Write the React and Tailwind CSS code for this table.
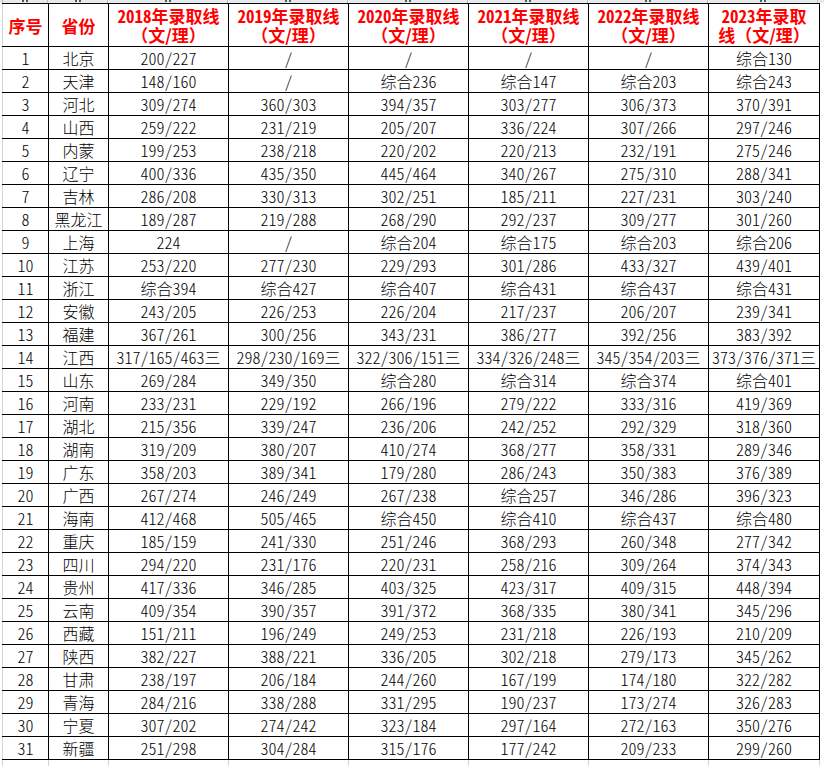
import React from "react";

const years = [
  ["2018年录取线", "（文/理）"],
  ["2019年录取线", "（文/理）"],
  ["2020年录取线", "（文/理）"],
  ["2021年录取线", "（文/理）"],
  ["2022年录取线", "（文/理）"],
  ["2023年录取", "线（文/理）"],
];

const rows = [
  ["北京", "200/227", "/", "/", "/", "/", "综合130"],
  ["天津", "148/160", "/", "综合236", "综合147", "综合203", "综合243"],
  ["河北", "309/274", "360/303", "394/357", "303/277", "306/373", "370/391"],
  ["山西", "259/222", "231/219", "205/207", "336/224", "307/266", "297/246"],
  ["内蒙", "199/253", "238/218", "220/202", "220/213", "232/191", "275/246"],
  ["辽宁", "400/336", "435/350", "445/464", "340/267", "275/310", "288/341"],
  ["吉林", "286/208", "330/313", "302/251", "185/211", "227/231", "303/240"],
  ["黑龙江", "189/287", "219/288", "268/290", "292/237", "309/277", "301/260"],
  ["上海", "224", "/", "综合204", "综合175", "综合203", "综合206"],
  ["江苏", "253/220", "277/230", "229/293", "301/286", "433/327", "439/401"],
  ["浙江", "综合394", "综合427", "综合407", "综合431", "综合437", "综合431"],
  ["安徽", "243/205", "226/253", "226/204", "217/237", "206/207", "239/341"],
  ["福建", "367/261", "300/256", "343/231", "386/277", "392/256", "383/392"],
  ["江西", "317/165/463三", "298/230/169三", "322/306/151三", "334/326/248三", "345/354/203三", "373/376/371三"],
  ["山东", "269/284", "349/350", "综合280", "综合314", "综合374", "综合401"],
  ["河南", "233/231", "229/192", "266/196", "279/222", "333/316", "419/369"],
  ["湖北", "215/356", "339/247", "236/206", "242/252", "292/329", "318/360"],
  ["湖南", "319/209", "380/207", "410/274", "368/277", "358/331", "289/346"],
  ["广东", "358/203", "389/341", "179/280", "286/243", "350/383", "376/389"],
  ["广西", "267/274", "246/249", "267/238", "综合257", "346/286", "396/323"],
  ["海南", "412/468", "505/465", "综合450", "综合410", "综合437", "综合480"],
  ["重庆", "185/159", "241/330", "251/246", "368/293", "260/348", "277/342"],
  ["四川", "294/220", "231/176", "220/231", "258/216", "309/264", "374/343"],
  ["贵州", "417/336", "346/285", "403/325", "423/317", "409/315", "448/394"],
  ["云南", "409/354", "390/357", "391/372", "368/335", "380/341", "345/296"],
  ["西藏", "151/211", "196/249", "249/253", "231/218", "226/193", "210/209"],
  ["陕西", "382/227", "388/221", "336/205", "302/218", "279/173", "345/262"],
  ["甘肃", "238/197", "206/184", "244/260", "167/199", "174/180", "322/282"],
  ["青海", "284/216", "338/288", "331/295", "190/237", "173/274", "326/283"],
  ["宁夏", "307/202", "274/242", "323/184", "297/164", "272/163", "350/276"],
  ["新疆", "251/298", "304/284", "315/176", "177/242", "209/233", "299/260"],
];

// widths of the sheet columns, left strip first
const stripCols = ["w-[3px]", "w-[45px]", "w-[60px]", "w-[120px]", "w-[120px]", "w-[120px]", "w-[120px]", "w-[120px]", "w-[110px]"];

const cell = "p-0 text-center align-middle border border-black whitespace-nowrap";

const App = () => {
  return (
    <div className="w-[824px] h-[766px] overflow-hidden bg-white text-black font-['Noto_Sans_CJK_SC',sans-serif] [font-feature-settings:'hwid']">
      {/* Column header strip (cut off) */}
      <div className="flex h-[3px] bg-[#e6e9ee]">
        {stripCols.map((w, i) => (
          <div key={i} className={`${w} shrink-0 relative border-r border-[#b8bcc4]`}>
            {i > 0 && (
              <div className="absolute left-1/2 top-0 -translate-x-1/2 flex gap-[2px]">
                <span className="w-[2px] h-[2px] bg-[#555]"></span>
                <span className="w-[2px] h-[2px] bg-[#555]"></span>
              </div>
            )}
          </div>
        ))}
      </div>

      <table className="ml-[2px] border-collapse table-fixed w-[817px]">
        <colgroup>
          <col className="w-[46px]" />
          <col className="w-[60px]" />
          <col className="w-[120px]" />
          <col className="w-[120px]" />
          <col className="w-[120px]" />
          <col className="w-[120px]" />
          <col className="w-[120px]" />
          <col className="w-[111px]" />
        </colgroup>
        <thead>
          <tr className="h-[43px] text-[#ff0000] font-bold text-[17px] leading-[19px]">
            <th className={`${cell} border-l-[#d4d4d4]`}>序号</th>
            <th className={cell}>省份</th>
            {years.map((y, i) => (
              <th key={i} className={cell}>
                <div>{y[0]}</div>
                <div className="[font-feature-settings:normal]">{y[1]}</div>
              </th>
            ))}
          </tr>
        </thead>
        <tbody className="text-[16px] leading-[20px] font-light">
          {rows.map((r, i) => (
            <tr key={i} className="h-[23px]">
              <td className={`${cell} border-l-[#d4d4d4]`}>{i + 1}</td>
              {r.map((v, j) => (
                <td key={j} className={cell}>
                  {v}
                </td>
              ))}
            </tr>
          ))}
          {/* empty sheet row below the table */}
          <tr className="h-[23px]">
            {Array.from({ length: 8 }).map((_, j) => (
              <td key={j} className="p-0 border border-[#d4d4d4]"></td>
            ))}
          </tr>
        </tbody>
      </table>
    </div>
  );
};

export default App;
